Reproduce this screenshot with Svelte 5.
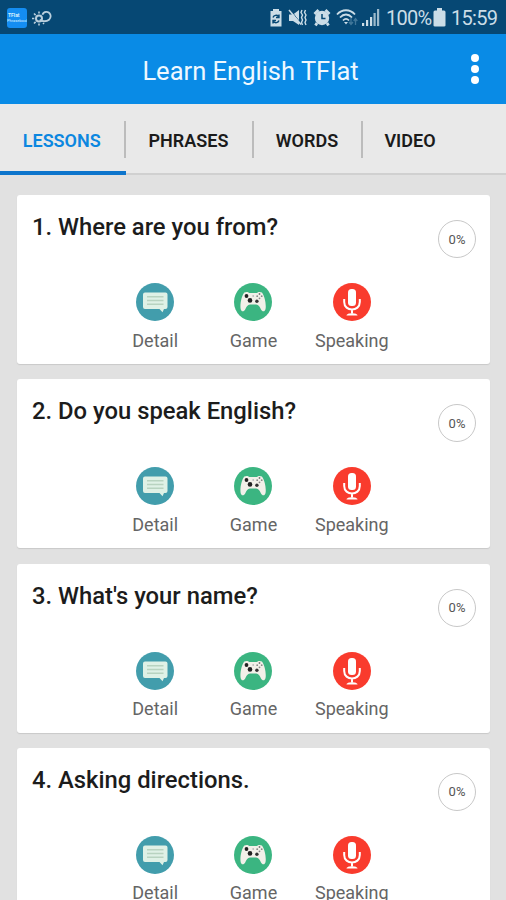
<script>
  const tabs = [
    { label: 'LESSONS', width: 125.5 },
    { label: 'PHRASES', width: 128 },
    { label: 'WORDS', width: 109 },
    { label: 'VIDEO', width: 97 }
  ];
  const lessons = [
    'Where are you from?',
    'Do you speak English?',
    "What's your name?",
    'Asking directions.'
  ];
  let active = $state(0);
</script>

{#snippet detailIcon()}
  <svg class="action-icon" viewBox="0 0 38 38">
    <circle cx="19" cy="19" r="19" fill="#429dac" />
    <path d="M9 9.500h20.500a2 2 0 0 1 2 2v12.500a2 2 0 0 1-2 2H28l-1.500 3.200-3-3.200H9a2 2 0 0 1-2-2v-12.500a2 2 0 0 1 2-2z" fill="#dff1e6" />
    <path d="M11 13.700h16.500M11 17.500h16.500M11 21.300h16.500" stroke="#b8d3c0" stroke-width="1.500" />
  </svg>
{/snippet}

{#snippet gameIcon()}
  <svg class="action-icon" viewBox="0 0 38 38">
    <circle cx="19" cy="19" r="19" fill="#3bb581" />
    <path d="M10.300 9.600c1.800-1.200 4-.8 5 .4h7.600c1-1.200 3.200-1.600 5-.4 2.700 3.600 4.200 10.500 3.800 15.400-.3 3.900-3.200 4.400-4.700 1.600-1.300-2.800-2.400-5.100-4.800-5.100h-6.200c-2.400 0-3.500 2.300-4.800 5.100-1.500 2.800-4.400 2.300-4.700-1.600-.4-4.900 1.100-11.800 3.800-15.400z" fill="#f2f0e9" />
    <circle cx="12.500" cy="13" r="1.900" fill="#222" />
    <circle cx="16" cy="17.400" r="2.300" fill="#222" />
    <circle cx="22.900" cy="18.300" r="1.700" fill="#333" />
    <circle cx="19.200" cy="13" r=".9" fill="#bbb" />
    <circle cx="25.500" cy="11" r=".9" fill="#777" />
    <circle cx="25.500" cy="15.300" r=".9" fill="#888" />
    <circle cx="23.200" cy="13.200" r=".9" fill="#888" />
    <circle cx="27.700" cy="13.200" r=".9" fill="#888" />
  </svg>
{/snippet}

{#snippet micIcon()}
  <svg class="action-icon" viewBox="0 0 38 38">
    <circle cx="19" cy="19" r="19" fill="#f93b2d" />
    <rect x="15" y="6" width="8" height="17" rx="3.500" fill="#fff" />
    <path d="M11.200 16v3c0 10 15.600 10 15.600 0v-3M19 26.500v4" fill="none" stroke="#fff" stroke-width="2" />
    <path d="M13.500 32.500c0-3 11-3 11 0z" fill="#fff" />
  </svg>
{/snippet}

<div class="screen">
  <div class="status">
    <div class="app-badge"><b>TFlat</b><span>Phrasebook</span></div>
    <svg class="weather" width="20" height="18" viewBox="0 0 20 18" fill="none" stroke="#b9cfdd">
      <circle cx="7" cy="9.500" r="3" stroke-width="2" />
      <path d="M7 2.500v2M7 14.500v2M0 9.500h2.300M2 4.500l1.600 1.600M2 14.500l1.600-1.600M11 14l1 1" stroke-width="1.600" />
      <path d="M8 10.500c1.500 2.400 6.700 2.200 9 .3 3.300-3.300 1-8.300-3-8-2.300.2-3 1.200-3.600 2.900" stroke-width="1.800" />
    </svg>
    <div class="status-icons">
      <svg width="14" height="20" viewBox="0 0 14 20">
        <path d="M4 1h6v2h2.500v15.500h-11V3H4z" fill="#cbdde7" />
        <path d="M4 9.500a3.200 3.200 0 0 1 5.500-1M10 12.500a3.200 3.200 0 0 1-5.500 1M10 6.500v3H7M4 15.500v-3h3" fill="none" stroke="#064874" stroke-width="1.400" />
      </svg>
      <svg width="19" height="20" viewBox="0 0 19 20">
        <path d="M1 6.500h4l6-4.500v15l-6-4H1z" fill="#cbdde7" />
        <path d="M2 1.500l11 14" stroke="#064874" stroke-width="1" />
        <path d="M1 2l12 14.500" stroke="#cbdde7" stroke-width="1.500" />
        <path d="M14 2l-1 2.500L14.500 7l-1 2.500 1 2.500-1 2.500 1 2.500M17.500 2l-1 2.500L18 7l-1 2.500 1 2.500-1 2.500 1 2.500" fill="none" stroke="#cbdde7" stroke-width="1.400" />
      </svg>
      <svg width="18" height="20" viewBox="0 0 18 20">
        <circle cx="9" cy="10" r="7.200" fill="#cbdde7" />
        <path d="M1.500 6l4-4M16.500 6l-4-4M4 15l-1.500 2.500M14 15l1.500 2.500" stroke="#cbdde7" stroke-width="2.800" />
        <path d="M9 6v4.500h3.500" fill="none" stroke="#064874" stroke-width="1.500" />
      </svg>
      <svg width="22" height="20" viewBox="0 0 22 20">
        <path d="M1 6.500c5-5.700 13-5.700 18 0M4 9.500c3.700-4 8.300-4 12 0M7 12.500c2-2.300 4-2.300 6 0" fill="none" stroke="#cbdde7" stroke-width="1.800" />
        <path d="M8 14l2 2.500 2-2.500z" fill="#cbdde7" />
        <path d="M15 10v6M13 14l2 2.500 2-2.500M19.500 17v-6M17.700 13l1.800-2.500 1.800 2.500" fill="none" stroke="#3f7699" stroke-width="1.300" />
      </svg>
      <svg width="19" height="20" viewBox="0 0 19 20" fill="#cbdde7">
        <path d="M1 15h2.200v3H1zM5 12h2.200v6H5zM9 9h2.200v9H9z" />
        <path d="M12.500 5h2.200v13h-2.200zM16 1h2.200v17H16z" fill="#9bb9cb" />
      </svg>
    </div>
    <span class="percent">100%</span>
    <svg class="battery" width="13" height="19" viewBox="0 0 13 19"><path d="M4 0h5v2.500h2q1.500 0 1.500 1.500v13.500q0 1-1.500 1H2q-1.500 0-1.500-1V4Q.5 2.500 2 2.500h2z" fill="#cbdde7" /></svg>
    <span class="clock">15:59</span>
  </div>

  <header>
    <h1>Learn English TFlat</h1>
    <button class="more" aria-label="More"><i></i><i></i><i></i></button>
  </header>

  <nav>
    {#each tabs as tab, i}
      <button class="tab" class:active={active === i} style:width="{tab.width}px" onclick={() => (active = i)}>
        <span>{tab.label}</span>
      </button>
    {/each}
  </nav>

  <main>
    {#each lessons as lesson, i}
      <section class="card">
        <div class="top">
          <h2>{i + 1}. {lesson}</h2>
          <div class="progress"><span>0%</span></div>
        </div>
        <div class="actions">
          <div class="action">{@render detailIcon()}<span>Detail</span></div>
          <div class="action">{@render gameIcon()}<span>Game</span></div>
          <div class="action">{@render micIcon()}<span>Speaking</span></div>
        </div>
      </section>
    {/each}
  </main>
</div>

<style>
  :global(body) { margin: 0; overflow: hidden; }
  .screen {
    width: 506px; height: 900px; overflow: hidden; display: flex; flex-direction: column;
    background: #e1e1e1; font-family: Roboto, sans-serif;
  }
  svg { display: block; flex: none; }
  button { border: 0; padding: 0; margin: 0; background: none; font: inherit; }
  .status {
    height: 34px; flex: none; box-sizing: border-box; display: flex; align-items: center;
    padding: 1px 9px 0 7px; background: #064874; color: #cbdde7; font-size: 20px; white-space: nowrap;
  }
  .app-badge {
    width: 20px; height: 20px; border-radius: 3px; overflow: hidden; background: #148df2; color: #d9efff;
    display: flex; flex-direction: column; justify-content: center; font-size: 4px; line-height: 5px;
  }
  .app-badge b { font-size: 5px; padding-left: 1px; }
  .weather { margin-left: 5px; }
  .status-icons { display: flex; gap: 5px; margin-left: auto; }
  .status-icons svg:nth-child(3) { margin-left: 1px; }
  .status-icons svg:nth-child(5) { margin-left: -2px; }
  .percent { width: 45px; margin-left: 6px; letter-spacing: -.7px; padding-top: 1px; }
  .battery { margin-left: 2px; }
  .clock { width: 46px; margin-left: 5px; letter-spacing: -.7px; padding-top: 1px; }
  header {
    height: 70px; flex: none; background: #098be6; display: grid;
    grid-template-columns: 1fr auto 1fr; align-items: center;
  }
  h1 { grid-column: 2; margin: 4px 5px 0 0; font-size: 25.500px; font-weight: 400; color: #eef8ff; white-space: nowrap; }
  .more { justify-self: end; margin-right: 27px; display: flex; flex-direction: column; gap: 3px; }
  .more i { width: 8px; height: 8px; border-radius: 50%; background: #fff; }
  nav { height: 71px; flex: none; box-sizing: border-box; display: flex; background: #e9e9e9; border-bottom: 2px solid #d0d0d0; }
  .tab {
    height: 71px; box-sizing: border-box; display: flex; align-items: center; flex: none;
    border-bottom: 4px solid transparent; color: #1b1b1b; font-size: 18px; font-weight: 600; padding-top: 4px;
  }
  .tab span {
    flex: 1; height: 37px; line-height: 39px; box-sizing: border-box; text-align: center;
    border-right: 2px solid #bcbcbc; white-space: nowrap;
  }
  .tab:last-child span { border-right-color: transparent; }
  .tab.active { color: #0c87e0; border-bottom-color: #0d75cc; }
  main { flex: 1; min-height: 0; overflow: hidden; padding: 20px 16px 0 17px; display: flex; flex-direction: column; gap: 15.300px; }
  .card {
    height: 169px; flex: none; box-sizing: border-box; background: #fff; border-radius: 3px;
    padding: 15px 14px 0 15px; box-shadow: 0 1px 1px #c9c9c9;
  }
  .top { display: flex; justify-content: space-between; height: 73px; }
  h2 { margin: 0; font-size: 23.800px; line-height: 34px; font-weight: 500; color: #1c1c1c; white-space: nowrap; }
  .progress {
    width: 38px; height: 38px; margin-top: 10px; box-sizing: border-box; border: 1.500px solid #c8c8c8;
    border-radius: 50%; display: grid; place-items: center; font-size: 13px; color: #555;
  }
  .actions { display: flex; justify-content: center; margin-right: 1px; }
  .action { width: 98.300px; flex: none; display: flex; flex-direction: column; align-items: center; color: #656565; font-size: 18px; line-height: 24px; }
  .action-icon { width: 38px; height: 38px; margin-bottom: 7.500px; }
</style>
